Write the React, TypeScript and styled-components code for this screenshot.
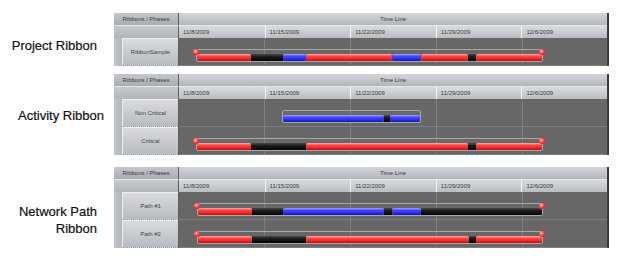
import * as React from 'react';
import styled, { createGlobalStyle } from 'styled-components';

const GlobalStyle = createGlobalStyle`
  html, body {
    margin: 0;
    padding: 0;
    background: #ffffff;
  }
  body {
    font-family: 'Liberation Sans', Arial, sans-serif;
  }
`;

type Kind = 'red' | 'blue' | 'black';

interface Segment {
  kind: Kind;
  from: number;
  to: number;
}

interface Ribbon {
  name: string;
  start: number;
  end: number;
  dots: boolean;
  segments: Segment[];
}

// x positions are screen pixels, timeline starts at 179
const ORIGIN = 179;
const DATES = ['11/8/2009', '11/15/2009', '11/22/2009', '11/29/2009', '12/6/2009'];

const seg = (kind: Kind, from: number, to: number): Segment => ({ kind, from, to });

const projectRows: Ribbon[] = [
  {
    name: 'RibbonSample',
    start: 196,
    end: 543,
    dots: true,
    segments: [
      seg('red', 196, 250), seg('black', 250, 282), seg('blue', 282, 306), seg('red', 306, 392),
      seg('blue', 392, 421), seg('red', 421, 469), seg('black', 469, 477), seg('red', 477, 543),
    ],
  },
];

const activityRows: Ribbon[] = [
  {
    name: 'Non Critical',
    start: 282,
    end: 421,
    dots: false,
    segments: [seg('blue', 282, 384), seg('black', 384, 391), seg('blue', 391, 421)],
  },
  {
    name: 'Critical',
    start: 196,
    end: 543,
    dots: true,
    segments: [
      seg('red', 196, 250), seg('black', 250, 306), seg('red', 306, 469),
      seg('black', 469, 477), seg('red', 477, 543),
    ],
  },
];

const networkRows: Ribbon[] = [
  {
    name: 'Path #1',
    start: 197,
    end: 543,
    dots: true,
    segments: [
      seg('red', 197, 251), seg('black', 251, 282), seg('blue', 282, 384),
      seg('black', 384, 392), seg('blue', 392, 421), seg('black', 421, 543),
    ],
  },
  {
    name: 'Path #2',
    start: 197,
    end: 543,
    dots: true,
    segments: [
      seg('red', 197, 251), seg('black', 251, 306), seg('red', 306, 470),
      seg('black', 470, 477), seg('red', 477, 543),
    ],
  },
];

const Page = styled.div`
  width: 620px;
  height: 262px;
  padding-top: 13px;
  box-sizing: border-box;
  display: flex;
  flex-direction: column;
`;

const Section = styled.div<{ $space: number }>`
  display: flex;
  flex-direction: row;
  margin-top: ${p => p.$space}px;
`;

const SectionLabel = styled.div<{ $top: number; $right: number }>`
  width: 114px;
  box-sizing: border-box;
  padding-top: ${p => p.$top}px;
  padding-right: ${p => p.$right}px;
  text-align: right;
  font-size: 13px;
  line-height: 17px;
  color: #111111;
  -webkit-text-stroke: 0.2px #111111;
`;

const Panel = styled.div`
  width: 495px;
  display: flex;
  flex-direction: column;
  border-right: 2px solid #3d3d3d;
  box-sizing: border-box;
  font-size: 6px;
  color: #3a3a3a;
`;

const HeaderRow = styled.div`
  display: grid;
  grid-template-columns: 65px 1fr;
  height: 12px;
`;

const CornerCell = styled.div`
  display: flex;
  align-items: center;
  justify-content: center;
  background: linear-gradient(to bottom, #c4c7cc, #a9acb1);
  border-right: 1px solid #5c5e61;
  box-sizing: border-box;
`;

const TitleCell = styled.div`
  display: flex;
  align-items: center;
  justify-content: center;
  background: linear-gradient(to bottom, #d2d5d9, #b3b6bb);
`;

const DateRow = styled.div`
  display: grid;
  grid-template-columns: 65px repeat(5, 1fr);
  height: 13px;
`;

const BlankCell = styled.div`
  background: linear-gradient(to bottom, #c6c9cd, #b1b4b9);
  border-right: 1px solid #5c5e61;
  border-top: 1px solid #e4e6e8;
  box-sizing: border-box;
`;

const DateCell = styled.div<{ $first: boolean }>`
  display: flex;
  align-items: center;
  padding-left: 4px;
  background: linear-gradient(to bottom, #d8dbdf, #babdc2);
  border-left: ${p => (p.$first ? 'none' : '1px solid #f4f5f6')};
  border-top: 1px solid #e4e6e8;
  box-sizing: border-box;
`;

const BodyRow = styled.div`
  display: grid;
  grid-template-columns: 65px 1fr;
  height: 28px;
`;

const RowHead = styled.div`
  display: flex;
  flex-direction: row;
  border-right: 1px solid #5c5e61;
  box-sizing: border-box;
`;

const Strip = styled.div`
  width: 8px;
  background: linear-gradient(to right, #c2c5c9, #b4b7bb);
`;

const RowButton = styled.div`
  flex: 1;
  display: flex;
  align-items: center;
  justify-content: center;
  background: linear-gradient(to bottom, #d9dbde, #b8bbbf);
  border-top: 1px solid #eceef0;
  border-left: 1px solid #eceef0;
  border-bottom: 1px dotted #8d9bb0;
  box-sizing: border-box;
  color: #444444;
`;

const Lane = styled.div`
  position: relative;
  background-color: #676767;
  background-image: repeating-linear-gradient(
    to right,
    transparent 0,
    transparent 85px,
    #7f7f7f 85px,
    #7f7f7f 86px
  );
  border-bottom: 1px solid #7d7d7d;
  box-sizing: border-box;
`;

const Track = styled.div`
  position: absolute;
  top: 11px;
  height: 13px;
  border: 1px solid #a8a8a8;
  border-radius: 2px;
  box-sizing: border-box;
  background: transparent;
`;

const SegmentRow = styled.div`
  position: absolute;
  left: 0;
  right: 0;
  bottom: 0;
  height: 7px;
  display: flex;
  flex-direction: row;
`;

const segmentFill: Record<Kind, string> = {
  red: 'linear-gradient(to bottom, #ffb0b0 0%, #ff4a4a 30%, #e41c1c 80%, #b51010 100%)',
  blue: 'linear-gradient(to bottom, #a8a8ff 0%, #4a4aff 30%, #2626dc 80%, #1414a0 100%)',
  black: 'linear-gradient(to bottom, #4a4a4a 0%, #1a1a1a 40%, #050505 100%)',
};

const Bar = styled.div<{ $kind: Kind }>`
  height: 100%;
  background: ${p => segmentFill[p.$kind]};
  border-radius: ${p => (p.$kind === 'black' ? '0' : '2px')};
  box-sizing: border-box;
`;

const Dot = styled.div`
  position: absolute;
  top: 11px;
  width: 6px;
  height: 6px;
  margin-left: -3px;
  border-radius: 50%;
  background: radial-gradient(circle at 40% 35%, #ffb5b5, #ff3030 55%, #c81414);
`;

const RibbonLane: React.FC<{ ribbon: Ribbon }> = ({ ribbon }) => (
  <Lane>
    <Track style={{ left: ribbon.start - ORIGIN, width: ribbon.end - ribbon.start }}>
      <SegmentRow>
        {ribbon.segments.map((s, i) => (
          <Bar key={i} $kind={s.kind} style={{ width: s.to - s.from }} />
        ))}
      </SegmentRow>
    </Track>
    {ribbon.dots && (
      <>
        <Dot style={{ left: ribbon.start - ORIGIN }} />
        <Dot style={{ left: ribbon.end - ORIGIN - 1 }} />
      </>
    )}
  </Lane>
);

const Chart: React.FC<{ rows: Ribbon[] }> = ({ rows }) => (
  <Panel>
    <HeaderRow>
      <CornerCell>Ribbons / Phases</CornerCell>
      <TitleCell>Time Line</TitleCell>
    </HeaderRow>
    <DateRow>
      <BlankCell />
      {DATES.map((d, i) => (
        <DateCell key={d} $first={i === 0}>{d}</DateCell>
      ))}
    </DateRow>
    {rows.map(r => (
      <BodyRow key={r.name}>
        <RowHead>
          <Strip />
          <RowButton>{r.name}</RowButton>
        </RowHead>
        <RibbonLane ribbon={r} />
      </BodyRow>
    ))}
  </Panel>
);

export default function App() {
  return (
    <>
      <GlobalStyle />
      <Page>
        <Section $space={0}>
          <SectionLabel $top={24} $right={17}>Project Ribbon</SectionLabel>
          <Chart rows={projectRows} />
        </Section>
        <Section $space={8}>
          <SectionLabel $top={33} $right={10}>Activity Ribbon</SectionLabel>
          <Chart rows={activityRows} />
        </Section>
        <Section $space={12}>
          <SectionLabel $top={36} $right={17}>
            Network Path
            <br />
            Ribbon
          </SectionLabel>
          <Chart rows={networkRows} />
        </Section>
      </Page>
    </>
  );
}
